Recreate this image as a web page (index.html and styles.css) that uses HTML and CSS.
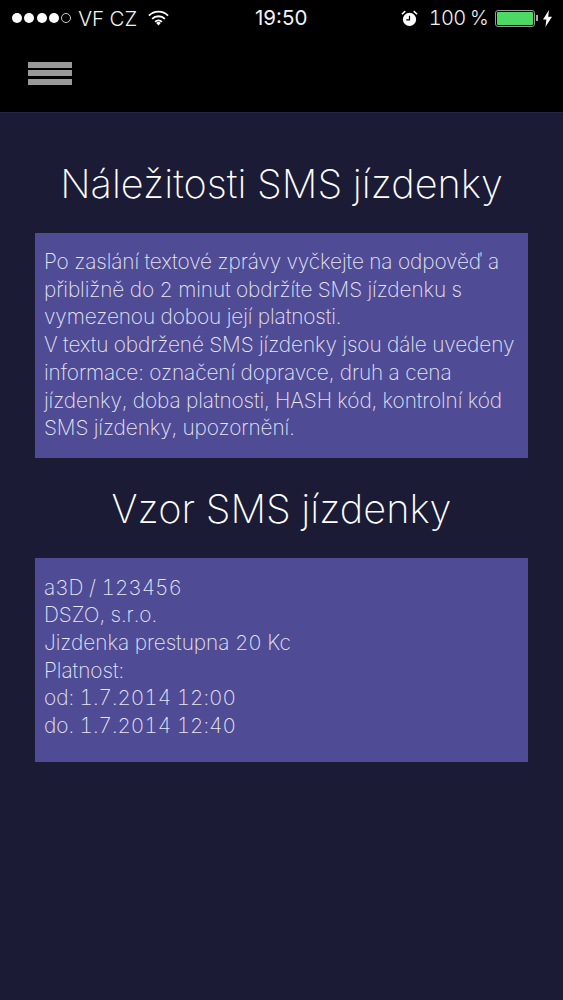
FILE: index.html
```html
<!DOCTYPE html>
<html lang="cs">
<head>
<meta charset="utf-8">
<title>Náležitosti SMS jízdenky</title>
<link rel="stylesheet" href="styles.css">
</head>
<body>
<header class="top">
  <div class="status">
    <div class="status-left">
      <span class="dots"><i></i><i></i><i></i><i></i><i class="off"></i></span>
      <span class="carrier">VF CZ</span>
      <svg class="wifi" viewBox="0 0 22 16"><path d="M1 5.6a14 14 0 0 1 20 0M4.3 9a9.3 9.3 0 0 1 13.4 0M7.5 12.1a4.8 4.8 0 0 1 7 0" fill="none" stroke="#fff" stroke-width="1.9"/><path d="M8.6 13.2 11 15.8l2.4-2.6a3.4 3.4 0 0 0-4.8 0z" fill="#fff"/></svg>
    </div>
    <div class="time">19:50</div>
    <div class="status-right">
      <svg class="alarm" viewBox="0 0 18 18"><circle cx="9" cy="10" r="7" fill="#fff"/><path d="M9 6v4.5H5.5" fill="none" stroke="#000" stroke-width="1.3"/><path d="M1 4.5 4.5 1.2M17 4.5 13.5 1.2" stroke="#fff" stroke-width="1.6"/></svg>
      <span class="pct">100 %</span>
      <span class="battery"><span class="fill"></span></span><span class="nub"></span>
      <svg class="bolt" viewBox="0 0 9 17"><path d="M6 0 0 9.5h3.4L2.4 17 9 6.8H5.2z" fill="#fff"/></svg>
    </div>
  </div>
  <div class="nav">
    <div class="burger"><span></span><span></span><span></span></div>
  </div>
</header>
<main class="content">
  <h1>Náležitosti SMS jízdenky</h1>
  <p class="box box-info">Po zaslání textové zprávy vyčkejte na odpověď a<br>přibližně do 2 minut obdržíte SMS jízdenku s<br>vymezenou dobou její platnosti.<br>V textu obdržené SMS jízdenky jsou dále uvedeny<br>informace: označení dopravce, druh a cena<br>jízdenky, doba platnosti, HASH kód, kontrolní kód<br>SMS jízdenky, upozornění.</p>
  <h2>Vzor SMS jízdenky</h2>
  <p class="box box-sample">a3D / 123456<br>DSZO, s.r.o.<br>Jizdenka prestupna 20 Kc<br>Platnost:<br>od: 1.7.2014 12:00<br>do. 1.7.2014 12:40</p>
</main>
</body>
</html>
```
FILE: styles.css
```css
* { box-sizing: border-box; }
html, body { margin: 0; height: 100%; }
body {
  width: 563px;
  height: 1000px;
  overflow: hidden;
  background: #1b1b35;
  color: #fff;
  font-family: Inter, "Liberation Sans", sans-serif;
  font-weight: 300;
  font-feature-settings: "tnum";
}
.top { height: 113px; background: #000; border-bottom: 1px solid #26264a; }
.status {
  height: 36px;
  display: flex;
  align-items: center;
  justify-content: space-between;
  font-size: 20px;
  color: #f2f2f2;
  position: relative;
}
.status-left { display: flex; align-items: center; padding-left: 12px; }
.dots { display: flex; gap: 2.3px; }
.dots i { width: 10px; height: 10px; border-radius: 50%; background: #fff; }
.dots i.off { background: none; border: 1px solid #ccc; }
.carrier { margin-left: 7px; font-size: 20.5px; }
.wifi { width: 21px; height: 16px; margin-left: 11px; }
.time { position: absolute; left: 255px; top: 6px; font-weight: 400; line-height: 24px; font-feature-settings: "tnum" 0; font-size: 20.5px; }
.status-right { display: flex; align-items: center; padding-right: 11px; }
.alarm { width: 17px; height: 17px; }
.pct { margin-left: 11px; letter-spacing: -0.75px; }
.battery {
  margin-left: 7px; width: 40px; height: 17px; border: 1px solid #999; border-radius: 3px; padding: 1px; display: block;
}
.fill { display: block; height: 100%; background: #4cd964; border-radius: 1px; }
.nub { width: 2px; height: 6px; background: #aaa; margin-left: 1px; }
.bolt { width: 9px; height: 17px; margin-left: 5px; }
.nav { padding: 25.5px 0 0 28px; }
.burger { width: 44px; display: flex; flex-direction: column; gap: 2.5px; }
.burger span { height: 6px; background: #999; }
.content { padding: 0 35px; }
h1, h2 { margin: 0; font-weight: 200; text-align: center; white-space: nowrap; font-size: 39.7px; line-height: 48px; }
h1 { margin-top: 47px; }
h2 { margin-top: 27px; }
.box { margin: 0; background: #4f4b95; color: #e6e6f4; font-size: 20.8px; font-weight: 200; line-height: 27.7px; padding: 0 9px; white-space: nowrap; }
.box-info { margin-top: 25px; height: 225px; padding-top: 15px; letter-spacing: -0.1px; }
.box-sample { margin-top: 25px; height: 204px; padding-top: 15.5px; letter-spacing: -0.03px; }
```
